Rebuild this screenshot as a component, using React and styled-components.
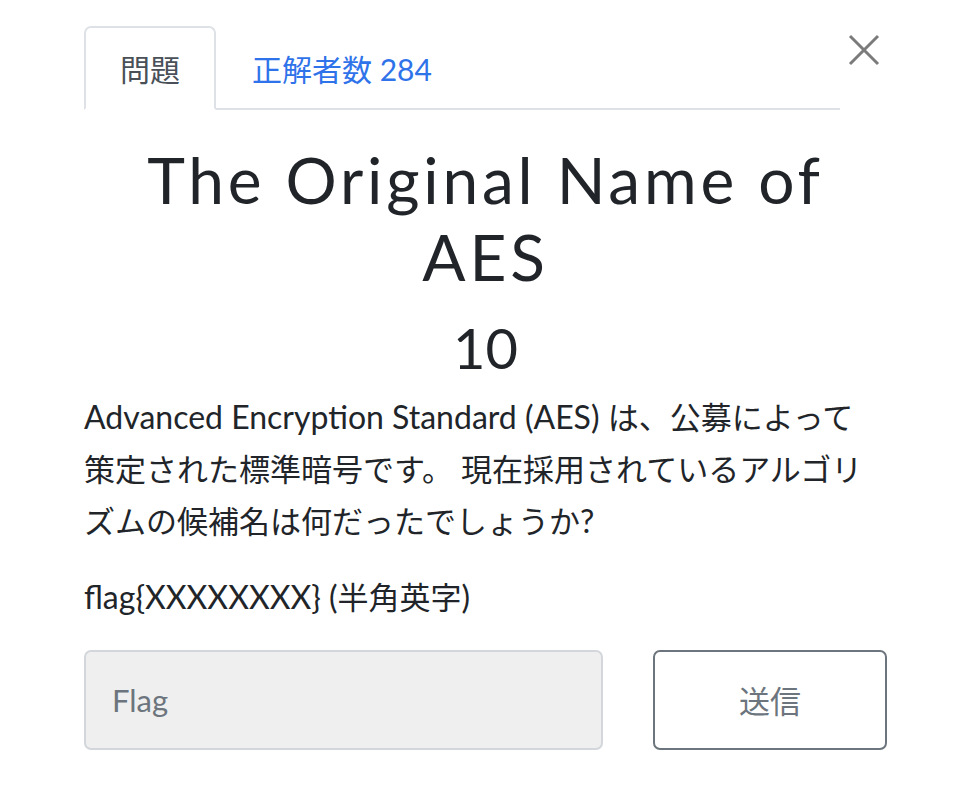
import React from 'react';
import styled, { createGlobalStyle } from 'styled-components';

const GlobalStyle = createGlobalStyle`
  body {
    margin: 0;
    background: #ffffff;
    font-family: Lato, "Noto Sans CJK JP", sans-serif;
    color: #212529;
  }
`;

const Modal = styled.div`
  width: 803px;
  padding: 26px 0 0 84px;
`;

const Header = styled.div`
  display: flex;
  align-items: flex-start;
`;

const Tabs = styled.ul`
  display: flex;
  width: 756px;
  margin: 0;
  padding: 0;
  list-style: none;
  border-bottom: 2px solid #dee2e6;
`;

const Tab = styled.li`
  height: 80px;
  padding: 0 34px;
  display: flex;
  align-items: center;
  font-size: 30px;
  margin-bottom: -2px;
  border: 2px solid ${(p) => (p.active ? '#dee2e6' : 'transparent')};
  border-bottom-color: ${(p) => (p.active ? '#ffffff' : 'transparent')};
  border-radius: 7px 7px 0 0;
  color: ${(p) => (p.active ? '#495057' : '#2f73ea')};
  background: ${(p) => (p.active ? '#ffffff' : 'transparent')};
`;

const Close = styled.button`
  margin: 8px 0 0 8px;
  padding: 0;
  width: 32px;
  height: 32px;
  border: none;
  background: none;
  display: flex;
`;

const Title = styled.h2`
  margin: 32px 0 0;
  padding: 0 40px;
  font-size: 64px;
  font-weight: 400;
  line-height: 1.2;
  letter-spacing: 3.8px;
  text-align: center;
`;

const Value = styled.h3`
  margin: 18px 0 10px;
  font-size: 56px;
  font-weight: 400;
  line-height: 1.2;
  text-align: center;
`;

const Text = styled.p`
  margin: 0 0 24px;
  padding-right: 10px;
  font-size: 32px;
  line-height: 52px;
  &:last-of-type {
    margin-bottom: 27px;
  }
`;

const Ja = styled.span`
  font-size: 31px;
`;

const Form = styled.form`
  display: flex;
  gap: 50px;
`;

const Input = styled.input`
  box-sizing: border-box;
  width: 519px;
  height: 100px;
  padding: 0 26px;
  border: 2px solid #d3d7db;
  border-radius: 7px;
  background: #efefef;
  font-family: Lato, "Noto Sans CJK JP", sans-serif;
  font-size: 31px;
  color: #495057;
  &::placeholder {
    color: #6c757d;
  }
`;

const Submit = styled.button`
  box-sizing: border-box;
  width: 234px;
  height: 100px;
  border: 2px solid #6c757d;
  border-radius: 7px;
  background: #ffffff;
  font-family: Lato, "Noto Sans CJK JP", sans-serif;
  font-size: 31px;
  color: #6c757d;
`;

export default function App() {
  return (
    <>
      <GlobalStyle />
      <Modal>
        <Header>
          <Tabs>
            <Tab active>問題</Tab>
            <Tab>正解者数 284</Tab>
          </Tabs>
          <Close aria-label="close">
            <svg width="32" height="32" viewBox="0 0 32 32">
              <path d="M2 2L30 30M30 2L2 30" stroke="#7b7b7b" strokeWidth="3" fill="none" />
            </svg>
          </Close>
        </Header>
        <Title>The Original Name of AES</Title>
        <Value>10</Value>
        <Text>
          Advanced Encryption Standard (AES) <Ja>は、公募によって策定された標準暗号です。</Ja>{' '}
          <Ja>現在採用されているアルゴリ</Ja>
          <br />
          <Ja>ズムの候補名は何だったでしょうか</Ja>?
        </Text>
        <Text>
          flag{'{'}XXXXXXXX{'}'} (<Ja>半角英字</Ja>)
        </Text>
        <Form onSubmit={(e) => e.preventDefault()}>
          <Input placeholder="Flag" />
          <Submit type="submit">送信</Submit>
        </Form>
      </Modal>
    </>
  );
}
